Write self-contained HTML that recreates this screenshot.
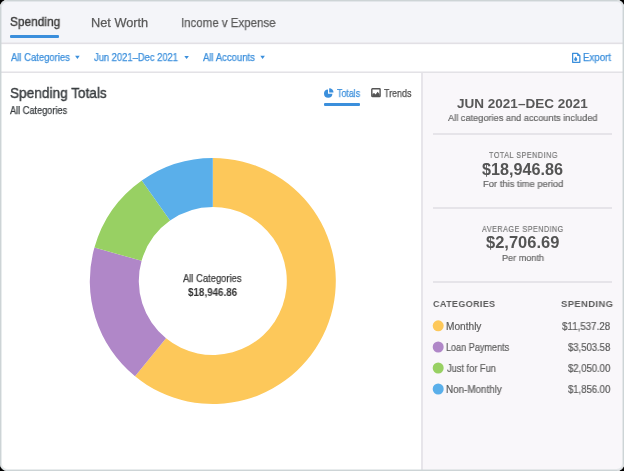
<!DOCTYPE html>
<html><head><meta charset="utf-8">
<style>
html,body{margin:0;padding:0;width:624px;height:471px;overflow:hidden;background:#000;}
*{box-sizing:border-box;}
body{font-family:"Liberation Sans",sans-serif;}
#frame{position:absolute;left:0;top:0;width:624px;height:471px;border-radius:7px;background:#fff;overflow:hidden;}
#border{position:absolute;left:0;top:0;width:624px;height:471px;border-radius:7px;border:1px solid #cdd4d6;box-shadow:inset 0 0 0 1px rgba(205,212,214,0.45);}
.t{position:absolute;white-space:nowrap;line-height:20px;will-change:transform;transform-origin:0 0;-webkit-text-stroke:0.2px currentColor;}
.r{position:absolute;}
.b{-webkit-text-stroke:0px;}
</style></head>
<body>
<div id="frame">
<div class="r" style="left:0;top:0;width:624px;height:43px;background:#f4f5f9;"></div>
<div class="r" style="left:0;top:42px;width:624px;height:1px;background:#ecebef;"></div>
<div class="r" style="left:0;top:43px;width:624px;height:1px;background:#e2e0e5;"></div>
<div class="r" style="left:0;top:44px;width:624px;height:1px;background:#fbfbfc;"></div>
<div class="r" style="left:10px;top:35px;width:49px;height:3px;border-radius:1px;background:#3b8fdc;"></div>
<div class="r" style="left:0;top:71px;width:624px;height:1px;background:#f0eff2;"></div>
<div class="r" style="left:0;top:72px;width:624px;height:1px;background:#e3e2e6;"></div>
<div class="r" style="left:423px;top:73px;width:201px;height:398px;background:#f9f7fa;"></div>
<div class="r" style="left:421px;top:73px;width:2px;height:398px;background:#e7e5ea;"></div>
<div class="r" style="left:433px;top:133px;width:179px;height:2px;background:#e6e4e9;"></div>
<div class="r" style="left:433px;top:207px;width:179px;height:2px;background:#e6e4e9;"></div>
<div class="r" style="left:433px;top:281px;width:179px;height:2px;background:#e6e4e9;"></div>
<div class="r" style="left:324px;top:103px;width:36px;height:3px;border-radius:1px;background:#3b8fdc;"></div>
<svg class="r" style="left:0;top:0" width="624" height="471">
<path d="M212.80 158.00A123.0 123.0 0 1 1 135.04 376.30L166.02 338.33A74.0 74.0 0 1 0 212.80 207.00Z" fill="#fdc85a"/>
<path d="M135.04 376.30A123.0 123.0 0 0 1 94.44 247.54L141.59 260.87A74.0 74.0 0 0 0 166.02 338.33Z" fill="#b087c8"/>
<path d="M94.44 247.54A123.0 123.0 0 0 1 141.78 180.57L170.08 220.58A74.0 74.0 0 0 0 141.59 260.87Z" fill="#98d063"/>
<path d="M141.78 180.57A123.0 123.0 0 0 1 212.80 158.00L212.80 207.00A74.0 74.0 0 0 0 170.08 220.58Z" fill="#5aafea"/>

<path d="M75.1 55.8h4.6l-2.3 3.2z" fill="#3b8fdc"/>
<path d="M184.3 55.9h4.6l-2.3 3.2z" fill="#3b8fdc"/>
<path d="M260.3 55.8h4.6l-2.3 3.2z" fill="#3b8fdc"/>
<g transform="translate(572,52.8)"><path d="M0.65 0.65H5.5L7.85 3V9.55H0.65Z" fill="none" stroke="#3b8fdc" stroke-width="1.3" stroke-linejoin="round"/><path d="M5.2 0.8L7.7 3.3H5.2Z" fill="#3b8fdc"/><path d="M3.7 3.6L2.3 5.9A1.55 1.55 0 1 0 5.1 5.9Z" fill="#3b8fdc"/></g>
<g transform="translate(324,88.1)"><path d="M4 1.3A4.2 4.2 0 1 0 8.4 5.6H4z" fill="#3b8fdc"/><path d="M5.2 0.2A4.2 4.2 0 0 1 9.5 4.4H5.2z" fill="#3b8fdc"/></g>
<g transform="translate(371.1,88.1)"><rect x="0.7" y="0.7" width="8.3" height="7.7" rx="0.6" fill="none" stroke="#555" stroke-width="1.4"/><path d="M1.2 8.4V5.9L3 4.8L4.5 6.3L6.5 3.6L8.5 6.2V8.4Z" fill="#555"/></g>
<circle cx="438.2" cy="325.8" r="5.5" fill="#fdc85a"/>
<circle cx="438.2" cy="347" r="5.5" fill="#b087c8"/>
<circle cx="438.2" cy="368" r="5.5" fill="#98d063"/>
<circle cx="438.2" cy="389" r="5.5" fill="#5aafea"/>
</svg>
<div class="t" style="left:9.8px;top:12.3px;font-size:12.75px;transform:scaleX(0.933);letter-spacing:0px;font-weight:normal;color:#3e3e3e;-webkit-text-stroke:0.4px currentColor">Spending</div>
<div class="t" style="left:91.0px;top:12.8px;font-size:12.75px;transform:scaleX(1.0);letter-spacing:0px;font-weight:normal;color:#5a5a5a;-webkit-text-stroke:0.25px currentColor">Net Worth</div>
<div class="t" style="left:180.5px;top:13.3px;font-size:13px;transform:scaleX(0.884);letter-spacing:0px;font-weight:normal;color:#5a5a5a;-webkit-text-stroke:0.25px currentColor">Income v Expense</div>
<div class="t" style="left:11.1px;top:48.0px;font-size:10.25px;transform:scaleX(0.923);letter-spacing:0px;font-weight:normal;color:#3b8fdc;-webkit-text-stroke:0.25px currentColor">All Categories</div>
<div class="t" style="left:94.2px;top:48.1px;font-size:10.25px;transform:scaleX(0.915);letter-spacing:0px;font-weight:normal;color:#3b8fdc;-webkit-text-stroke:0.25px currentColor">Jun 2021–Dec 2021</div>
<div class="t" style="left:203.3px;top:48.1px;font-size:10.25px;transform:scaleX(0.929);letter-spacing:0px;font-weight:normal;color:#3b8fdc;-webkit-text-stroke:0.25px currentColor">All Accounts</div>
<div class="t" style="left:582.6px;top:47.7px;font-size:10.25px;transform:scaleX(0.945);letter-spacing:0px;font-weight:normal;color:#3b8fdc;-webkit-text-stroke:0.25px currentColor">Export</div>
<div class="t" style="left:9.9px;top:82.6px;font-size:14.75px;transform:scaleX(0.924);letter-spacing:0px;font-weight:normal;color:#3a3e41;-webkit-text-stroke:0.4px currentColor">Spending Totals</div>
<div class="t" style="left:10.3px;top:100.8px;font-size:10.25px;transform:scaleX(0.895);letter-spacing:0px;font-weight:normal;color:#3a3e41;-webkit-text-stroke:0.25px currentColor">All Categories</div>
<div class="t" style="left:337.2px;top:83.7px;font-size:10.25px;transform:scaleX(0.863);letter-spacing:0px;font-weight:normal;color:#3b8fdc;-webkit-text-stroke:0.25px currentColor">Totals</div>
<div class="t" style="left:383.7px;top:83.7px;font-size:10.25px;transform:scaleX(0.868);letter-spacing:0px;font-weight:normal;color:#4e4e4e;-webkit-text-stroke:0.25px currentColor">Trends</div>
<div class="t" style="left:183.4px;top:268.5px;font-size:10.25px;transform:scaleX(0.917);letter-spacing:0px;font-weight:normal;color:#3d3d3d;-webkit-text-stroke:0.25px currentColor">All Categories</div>
<div class="t b" style="left:188.2px;top:282.6px;font-size:10px;transform:scaleX(0.982);letter-spacing:0px;font-weight:bold;color:#333">$18,946.86</div>
<div class="t b" style="left:456.9px;top:93.7px;font-size:13px;transform:scaleX(1.04);letter-spacing:0px;font-weight:bold;color:#585858">JUN 2021–DEC 2021</div>
<div class="t" style="left:448.2px;top:107.5px;font-size:9.75px;transform:scaleX(0.945);letter-spacing:0px;font-weight:normal;color:#666">All categories and accounts included</div>
<div class="t" style="left:488.7px;top:144.9px;font-size:8.5px;transform:scaleX(0.846);letter-spacing:0.6px;font-weight:normal;color:#777">TOTAL SPENDING</div>
<div class="t b" style="left:482.3px;top:159.7px;font-size:16px;transform:scaleX(1.012);letter-spacing:0px;font-weight:bold;color:#545454">$18,946.86</div>
<div class="t" style="left:482.9px;top:173.9px;font-size:9.5px;transform:scaleX(0.989);letter-spacing:0px;font-weight:normal;color:#666">For this time period</div>
<div class="t" style="left:481.9px;top:218.9px;font-size:8.5px;transform:scaleX(0.845);letter-spacing:0.6px;font-weight:normal;color:#777">AVERAGE SPENDING</div>
<div class="t b" style="left:486.4px;top:233.4px;font-size:16px;transform:scaleX(1.03);letter-spacing:0px;font-weight:bold;color:#545454">$2,706.69</div>
<div class="t" style="left:502.1px;top:247.9px;font-size:9.5px;transform:scaleX(0.959);letter-spacing:0px;font-weight:normal;color:#666">Per month</div>
<div class="t b" style="left:433.2px;top:294.4px;font-size:9.75px;transform:scaleX(0.922);letter-spacing:0.4px;font-weight:bold;color:#5c5c5c">CATEGORIES</div>
<div class="t b" style="left:561.0px;top:294.4px;font-size:9.75px;transform:scaleX(0.966);letter-spacing:0.4px;font-weight:bold;color:#5c5c5c">SPENDING</div>
<div class="t" style="left:445.9px;top:316.6px;font-size:10px;transform:scaleX(1.012);letter-spacing:0px;font-weight:normal;color:#5e5e5e">Monthly</div>
<div class="t" style="left:562.0px;top:316.6px;font-size:10px;transform:scaleX(0.976);letter-spacing:0px;font-weight:normal;color:#5a5a5a">$11,537.28</div>
<div class="t" style="left:445.9px;top:337.8px;font-size:10px;transform:scaleX(0.909);letter-spacing:0px;font-weight:normal;color:#5e5e5e">Loan Payments</div>
<div class="t" style="left:568.0px;top:337.8px;font-size:10px;transform:scaleX(0.95);letter-spacing:0px;font-weight:normal;color:#5a5a5a">$3,503.58</div>
<div class="t" style="left:446.9px;top:358.8px;font-size:10px;transform:scaleX(0.925);letter-spacing:0px;font-weight:normal;color:#5e5e5e">Just for Fun</div>
<div class="t" style="left:568.0px;top:358.8px;font-size:10px;transform:scaleX(0.95);letter-spacing:0px;font-weight:normal;color:#5a5a5a">$2,050.00</div>
<div class="t" style="left:445.9px;top:379.8px;font-size:10px;transform:scaleX(0.984);letter-spacing:0px;font-weight:normal;color:#5e5e5e">Non-Monthly</div>
<div class="t" style="left:568.0px;top:379.8px;font-size:10px;transform:scaleX(0.95);letter-spacing:0px;font-weight:normal;color:#5a5a5a">$1,856.00</div>
<div id="border"></div>
</div>
</body></html>
